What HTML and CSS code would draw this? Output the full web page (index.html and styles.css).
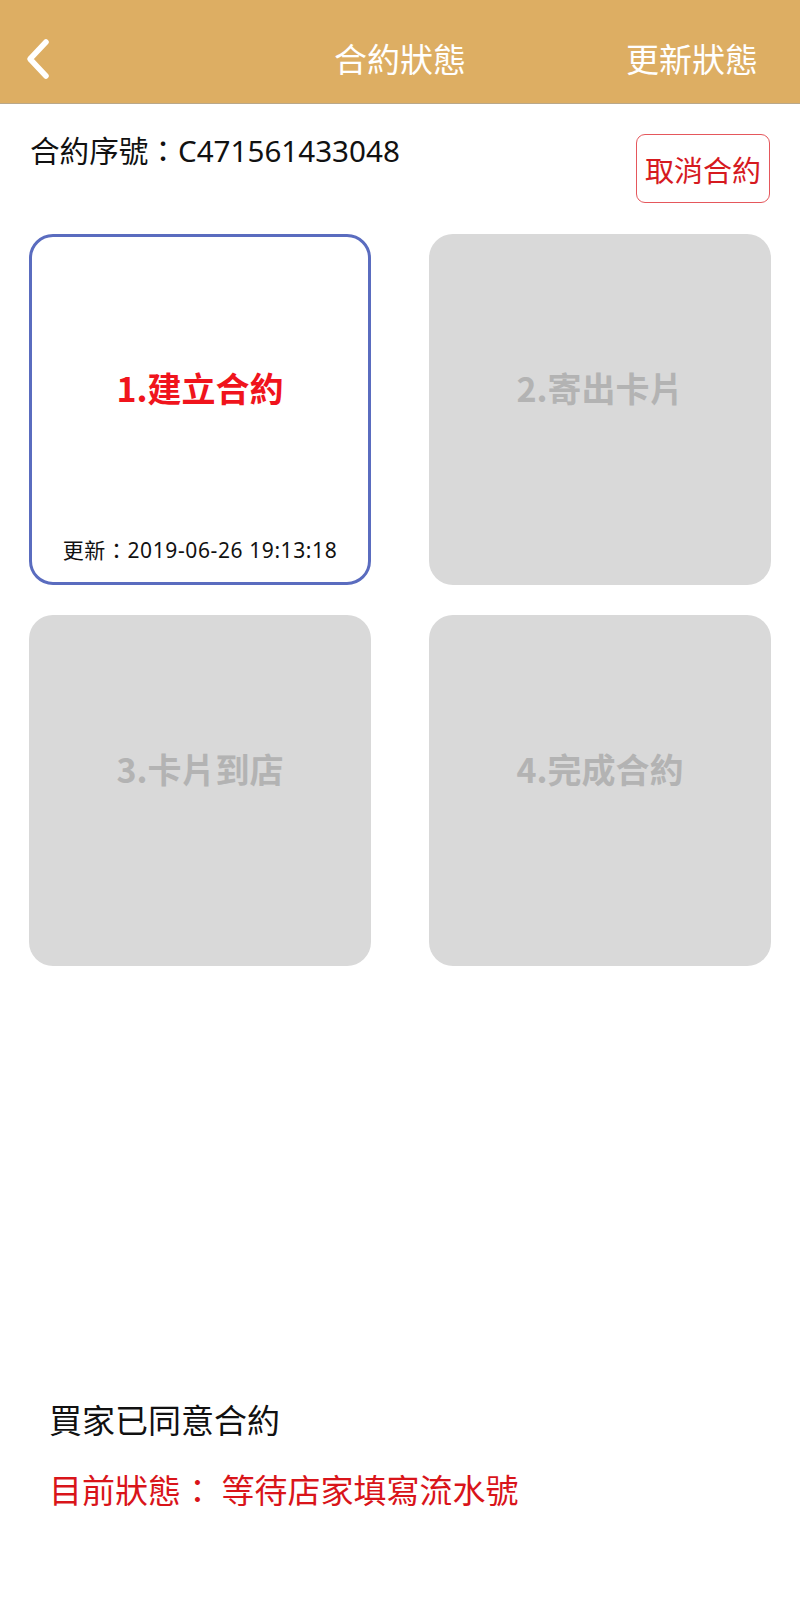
FILE: index.html
```html
<!DOCTYPE html>
<html lang="zh-Hant">
<head>
<meta charset="utf-8">
<title>合約狀態</title>
<link rel="stylesheet" href="styles.css">
</head>
<body>
<div class="page">
  <header class="nav">
    <div class="nav-left">
      <svg class="back" width="30" height="50" viewBox="0 0 30 50" aria-hidden="true">
        <path d="M21 4 L5 21 L21 38" fill="none" stroke="#fff" stroke-width="5.5" stroke-linecap="round" stroke-linejoin="round"/>
      </svg>
    </div>
    <div class="nav-title">合約狀態</div>
    <div class="nav-right">更新狀態</div>
  </header>

  <section class="info">
    <div class="serial">合約序號：C471561433048</div>
    <button class="cancel">取消合約</button>
  </section>

  <section class="steps">
    <div class="step active">
      <div class="step-label">1.建立合約</div>
      <div class="step-foot">更新：2019-06-26 19:13:18</div>
    </div>
    <div class="step">
      <div class="step-label">2.寄出卡片</div>
      <div class="step-foot"></div>
    </div>
    <div class="step">
      <div class="step-label">3.卡片到店</div>
      <div class="step-foot"></div>
    </div>
    <div class="step">
      <div class="step-label">4.完成合約</div>
      <div class="step-foot"></div>
    </div>
  </section>

  <section class="status">
    <div class="status-line">買家已同意合約</div>
    <div class="status-line current">目前狀態： 等待店家填寫流水號</div>
  </section>
</div>
</body>
</html>
```

FILE: styles.css
```css
* { box-sizing: border-box; }
html, body { margin: 0; padding: 0; background: #fff; }
body {
  font-family: "Noto Sans", "Noto Sans CJK TC", sans-serif;
  color: #111;
}
.page { width: 800px; min-height: 1600px; }

.nav {
  height: 104px;
  background: #ddae63;
  border-bottom: 1px solid #b9a88a;
  padding: 16px 25px 0 25px;
  display: grid;
  grid-template-columns: 1fr auto 1fr;
  align-items: center;
  color: #fff;
}
.nav-left { display: flex; align-items: center; }
.back { display: block; margin-top: 6px; }
.nav-title { font-size: 33px; line-height: 40px; }
.nav-right { text-align: right; padding-right: 17px; font-size: 33px; line-height: 40px; }

.info {
  display: flex;
  justify-content: space-between;
  align-items: flex-start;
  padding: 30px 30px 0 30px;
}
.serial { font-size: 29.6px; line-height: 34px; }
.cancel {
  width: 134px;
  height: 69px;
  border: 1px solid #e5575c;
  border-radius: 9px;
  background: #fff;
  color: #d61a1f;
  font-family: "Noto Sans CJK TC", sans-serif;
  font-size: 29px;
  padding: 0;
}

.steps {
  margin-top: 31px;
  padding: 0 29px;
  display: grid;
  grid-template-columns: 342px 342px;
  column-gap: 58px;
  row-gap: 30px;
}
.step {
  height: 351px;
  border-radius: 24px;
  background: #d9d9d9;
  border: 3px solid transparent;
  display: flex;
  flex-direction: column;
}
.step.active {
  background: #fff;
  border-color: #5a6cbf;
}
.step-label {
  flex: 1;
  display: flex;
  align-items: center;
  justify-content: center;
  padding-top: 13px;
  font-family: "Noto Sans CJK TC", sans-serif;
  font-size: 34px;
  font-weight: 700;
  color: #b3b3b3;
}
.step.active .step-label { color: #f0141c; }
.step-foot {
  height: 57px;
  padding-top: 13px;
  text-align: center;
  font-size: 21px;
  line-height: 24px;
  letter-spacing: 0.6px;
  color: #111;
}

.status {
  margin-top: 432px;
  padding-left: 49px;
}
.status-line {
  font-family: "Noto Sans CJK TC", sans-serif;
  font-size: 33px;
  line-height: 42px;
}
.status-line.current {
  margin-top: 28px;
  color: #d9141a;
}
```
